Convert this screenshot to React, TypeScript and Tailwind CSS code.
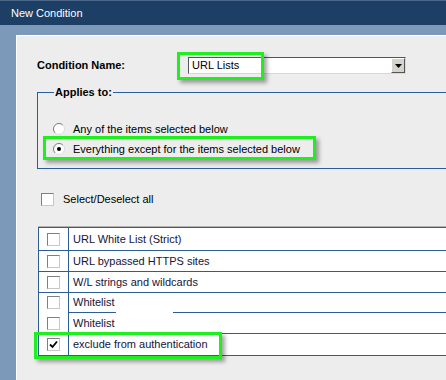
import React from 'react';

const font = { fontFamily: '"Liberation Sans", Arial, sans-serif' };

function Radio({ checked }: { checked?: boolean }) {
  return (
    <svg width="12" height="12" viewBox="0 0 12 12" className="shrink-0">
      <circle cx="6" cy="6" r="5.5" fill="#fff" />
      <path d="M2.1 9.9 A5.5 5.5 0 0 1 9.9 2.1" stroke="#7a7a7a" fill="none" />
      <path d="M9.9 2.1 A5.5 5.5 0 0 1 2.1 9.9" stroke="#dcdcdc" fill="none" />
      {checked && <circle cx="6" cy="6" r="2" fill="#000" />}
    </svg>
  );
}

function Checkbox({ checked }: { checked?: boolean }) {
  return (
    <span className="w-[13px] h-[13px] shrink-0 bg-white border border-t-[#7f7f7f] border-l-[#7f7f7f] border-r-[#c8c8c8] border-b-[#c8c8c8] flex items-center justify-center">
      {checked && (
        <svg width="9" height="9" viewBox="0 0 9 9">
          <path d="M1 4.5 L3.5 7 L8 1.5" stroke="#000" strokeWidth="1.8" fill="none" />
        </svg>
      )}
    </span>
  );
}

function Highlight({ className }: { className: string }) {
  return (
    <span
      className={`absolute border-[3px] border-[#1ef01e] shadow-[3px_3px_4px_rgba(0,0,0,0.35)] pointer-events-none ${className}`}
    />
  );
}

const rows = [
  { label: 'URL White List (Strict)', h: 'h-[22px]' },
  { label: 'URL bypassed HTTPS sites', h: 'h-[20px]' },
  { label: 'W/L strings and wildcards', h: 'h-[20px]' },
  { label: 'Whitelist', h: 'h-[19px]', split: true },
  { label: 'Whitelist', h: 'h-[20px]' },
  { label: 'exclude from authentication', h: 'h-[21px]', checked: true },
];

export default function App() {
  return (
    <div className="w-[446px] h-[380px] overflow-hidden flex flex-col bg-[#7c99b9] text-[11px] text-black" style={font}>
      <div className="h-[25px] shrink-0 bg-[#1d3e65] border-t border-[#4a6789] flex items-center pl-[11px] text-white text-[11px]">
        New Condition
      </div>

      <div className="flex-1 pt-[10px] pl-[16px] flex">
        <div className="flex-1 bg-[#ededed] border-t border-l border-white flex flex-col">
          {/* condition name */}
          <div className="mt-[21px] h-[17px] flex items-center">
            <span className="ml-[20px] w-[151px] font-bold">Condition Name:</span>
            <div className="relative w-[218px] h-[17px] bg-white border border-t-[#555] border-l-[#555] border-r-[#d8d8d8] border-b-[#d8d8d8] flex items-center">
              <span className="pl-[3px] flex-1">URL Lists</span>
              <span className="w-[14px] h-[15px] bg-[#d6d3cc] border border-t-white border-l-white border-r-[#555] border-b-[#555] flex items-center justify-center">
                <svg width="7" height="4" viewBox="0 0 7 4">
                  <path d="M0 0 H7 L3.5 4 Z" fill="#000" />
                </svg>
              </span>
              <Highlight className="left-[-12px] top-[-6px] w-[87px] h-[28px]" />
            </div>
          </div>

          {/* applies to */}
          <div className="relative mt-[18px] ml-[20px] h-[77px] border-l border-t border-b border-[#2d5d98]">
            <span className="absolute left-[16px] top-[-8px] px-[1px] bg-[#ededed] font-bold leading-[14px]">
              Applies to:
            </span>
            <div className="pt-[28px] flex flex-col gap-[4px]">
              <div className="h-[16px] pl-[15px] flex items-center gap-[8px]">
                <Radio />
                <span>Any of the items selected below</span>
              </div>
              <div className="relative h-[16px] pl-[15px] flex items-center gap-[8px]">
                <Radio checked />
                <span>Everything except for the items selected below</span>
                <Highlight className="left-[5px] top-[-5px] w-[273px] h-[24px]" />
              </div>
            </div>
          </div>

          {/* select all */}
          <div className="mt-[22px] h-[16px] ml-[24px] flex items-center gap-[9px]">
            <Checkbox />
            <span>Select/Deselect all</span>
          </div>

          {/* list */}
          <div className="mt-[19px] ml-[21px] border-t border-[#b4b4b4]">
            <div className="bg-white border-l border-t border-[#2d5d98] text-[#14143a]">
              {rows.map((r, i) =>
                r.split ? (
                  <div key={i}>
                    <div className={`${r.h} flex`}>
                      <div className="w-[30px] border-r border-[#2d5d98] flex items-center justify-center">
                        <Checkbox />
                      </div>
                      <div className="pl-[4px] flex items-center">{r.label}</div>
                    </div>
                    <div className="h-[1px] flex">
                      <div className="w-[30px] border-r border-[#2d5d98]" />
                      <div className="w-[47px] bg-[#2d5d98]" />
                      <div className="w-[57px]" />
                      <div className="flex-1 bg-[#2d5d98]" />
                    </div>
                  </div>
                ) : (
                  <div key={i} className={`relative ${r.h} box-content flex border-b border-[#2d5d98]`}>
                    <div className="w-[30px] border-r border-[#2d5d98] flex items-center justify-center">
                      <Checkbox checked={r.checked} />
                    </div>
                    <div className="pl-[4px] flex items-center">{r.label}</div>
                    {r.checked && <Highlight className="left-[-5px] top-[-2px] w-[188px] h-[27px]" />}
                  </div>
                )
              )}
            </div>
          </div>
        </div>
      </div>
    </div>
  );
}
